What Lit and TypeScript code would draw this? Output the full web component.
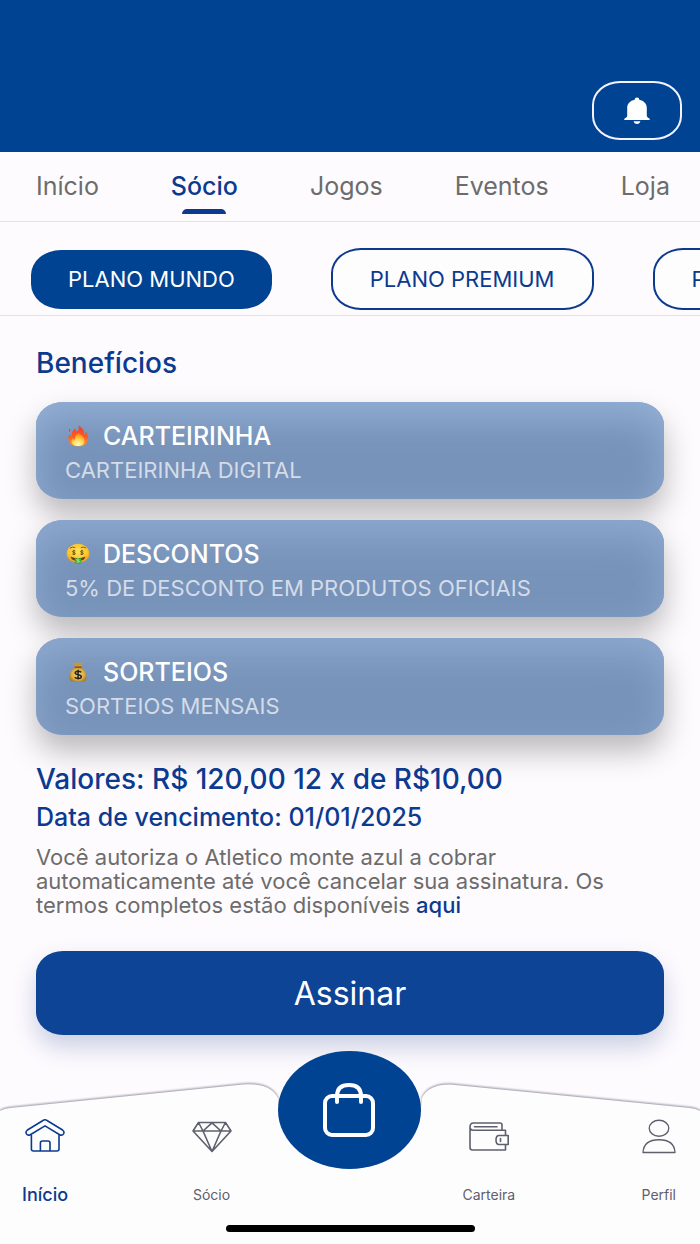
import { LitElement, html, css, svg } from "lit";
import { customElement, state } from "lit/decorators.js";

const bell = html`<svg width="28" height="28" viewBox="0 0 28 28" aria-hidden="true" fill="#fff">
  <path d="M14 0.6c1.3 0 2.2 .8 2.3 2.1c4.6 1 7.5 4 7.5 8.4v7.6c.3 1.500 1.200 2 2.900 3v1.300H1.300v-1.300c1.700-1 2.600-1.500 2.900-3v-7.600c0-4.400 2.900-7.400 7.500-8.400c.1-1.300 1-2.100 2.300-2.100z"/>
  <path d="M10.600 24.200h6.800c-.4 1.900-1.700 2.700-3.400 2.700s-3-.8-3.400-2.700z"/>
</svg>`;

const fire = html`<svg width="26" height="22" viewBox="0 0 26 22" aria-hidden="true">
  <defs>
    <linearGradient id="flame" x1="0" y1="0" x2="0" y2="1">
      <stop offset="0" stop-color="#f0402a"/><stop offset=".55" stop-color="#ff5b1f"/><stop offset="1" stop-color="#ffa12b"/>
    </linearGradient>
    <radialGradient id="core" cx=".5" cy=".85" r=".75">
      <stop offset="0" stop-color="#fffbd0"/><stop offset=".5" stop-color="#ffd84a"/><stop offset="1" stop-color="#ff8a22"/>
    </radialGradient>
  </defs>
  <path fill="url(#flame)" d="M13.300.5c4.300 2 6.200 5 5.900 9.200c1.200-.7 1.500-2 1.200-3.500c2.400 2.600 3.300 5.600 2.500 8.700c-1 4-4.900 6.400-9.700 6.400c-5.600 0-9.800-2.900-9.900-7.900c0-1.700.4-3.100 1.200-4.300c.3 1.400 1 2.300 2.200 2.700c-.6-4.200.8-7 4-8.300c-.3 1.400.1 2.400 1.200 3c1.800-1.400 2.400-3.400 1.400-6z"/>
  <path fill="#f0402a" d="M4.300 3.800c1.200.8 1.400 1.900.5 3.200c-1-.9-1.200-2-.5-3.200z"/>
  <path fill="url(#core)" d="M13.200 8.200c3.800 1.600 6.900 4.500 6.400 8.200c-.4 2.900-3 4.700-6.400 4.700s-6.700-1.700-6.800-4.700c-.1-1.500.4-2.600 1.300-3.500c.3 1.100 1 1.700 2.100 1.900c-.1-3 1-5.200 3.400-6.600z"/>
</svg>`;

const moneyFace = html`<svg width="26" height="22" viewBox="0 0 26 22" aria-hidden="true">
  <defs>
    <radialGradient id="face" cx=".5" cy=".4" r=".6">
      <stop offset="0" stop-color="#ffe55a"/><stop offset=".7" stop-color="#fcc52c"/><stop offset="1" stop-color="#e8921b"/>
    </radialGradient>
  </defs>
  <ellipse cx="13" cy="10.500" rx="11.400" ry="9.700" fill="url(#face)"/>
  <path d="M5 5.200q2.500-2 5.200-.6M15.800 4.600q2.700-1.400 5.200.6" fill="none" stroke="#8a5a12" stroke-width="1"/>
  <g fill="none" stroke="#6b4b12" stroke-width=".9">
    <path d="M10.400 8.200c-.6-.8-2.800-.8-2.900.4s3 .8 2.900 2s-2.400 1.200-3.100.3M8.900 6.800v5.200"/>
    <path d="M18.400 8.200c-.6-.8-2.800-.8-2.900.4s3 .8 2.900 2s-2.400 1.200-3.100.3M16.900 6.800v5.200"/>
  </g>
  <path d="M5.400 13.400q7.600 3.600 15.200 0q-1.500 4.600-7.600 4.600t-7.600-4.600z" fill="#6d3d10"/>
  <path d="M9.800 14.900q3.200.8 6.400 0v4.600q-.4 1.800-3.200 1.800t-3.200-1.800z" fill="#45ad3a"/>
  <path d="M14.300 16.500c-.6-.7-2.500-.6-2.500.3s2.600.7 2.500 1.700s-2 .9-2.600.2" fill="none" stroke="#d4f2c4" stroke-width=".8"/>
</svg>`;

const moneyBag = html`<svg width="26" height="22" viewBox="0 0 26 22" aria-hidden="true">
  <defs>
    <radialGradient id="bag" cx=".5" cy=".5" r=".6">
      <stop offset="0" stop-color="#f9d97a"/><stop offset=".6" stop-color="#dcae45"/><stop offset="1" stop-color="#9c6f20"/>
    </radialGradient>
  </defs>
  <path d="M8.200 1.500l2.400.6l2-.9l2.200.8l3-.8l-2.300 5h-5z" fill="#c9973a"/>
  <path d="M10.500 6h5.200c3.400 2.200 5.900 5.500 5.900 9.600c0 3.600-2 5.200-4.200 5.200H8.600c-2.300 0-4.200-1.600-4.200-5.200c0-4.100 2.600-7.400 6.100-9.600z" fill="url(#bag)"/>
  <path d="M9.800 6.200h6.600" stroke="#8b4a1c" stroke-width="1.400"/>
  <path d="M16.200 11.400c-1-1.700-6-1.600-6 .6s6.200 1.400 6.100 3.700s-5.400 2.300-6.400.3M13.100 8.800v9.800" fill="none" stroke="#22221e" stroke-width="1.500"/>
</svg>`;

const house = svg`<path d="M20 1.700Q21 1.700 22.400 2.700L37.600 12Q39.600 13.600 38.700 15.600Q37.300 18 34.700 16.800L20 7.900L5.300 16.800Q2.700 18 1.300 15.600Q.4 13.600 2.400 12L17.600 2.700Q19 1.700 20 1.700z"/>
  <path d="M6.400 17.400V31Q6.400 33 8.400 33H32Q34 33 34 31V17.400M15.400 33V25Q15.400 23 17.400 23H23Q25 23 25 25V33"/>`;
const diamond = svg`<path d="M6.500 4.500H33.500L39 13L20 33.500L1 13zM1 13H39M6.500 4.500L11 13L20 33.500L29 13L33.500 4.500M11 13L20 4.800L29 13"/>`;
const wallet = svg`<path d="M33 12.300V7Q33 5 31 5H4.500Q1 5 1 8.800V29.500Q1 32 3.500 32H36.500V26.500M36.500 17V12.300H4.500Q1 12.300 1 8.800M5.500 8.700H28M30 17.500H39.200V26.500H30Q27 26.500 27 22T30 17.500zM31.500 20.500V23.500"/>`;
const person = svg`<ellipse cx="20" cy="10.200" rx="11.500" ry="8"/><path d="M1.200 34.500Q2 21.800 20 21.800T38.800 34.500z"/>`;

const bagIcon = html`<svg width="54" height="56" viewBox="0 0 54 56" aria-hidden="true" fill="none" stroke="#fff" stroke-width="4" stroke-linecap="round">
  <rect x="3" y="14" width="48" height="39" rx="7"/>
  <path d="M15 20V14Q15 3 27 3T39 14V20"/>
</svg>`;

@customElement("app-root")
export class AppRoot extends LitElement {
  @state() private plan = 0;

  private tabs = ["Início", "Sócio", "Jogos", "Eventos", "Loja"];
  private plans = ["PLANO MUNDO", "PLANO PREMIUM", "PLANO"];
  private benefits = [
    { icon: fire, title: "CARTEIRINHA", text: "CARTEIRINHA DIGITAL" },
    { icon: moneyFace, title: "DESCONTOS", text: "5% DE DESCONTO EM PRODUTOS OFICIAIS" },
    { icon: moneyBag, title: "SORTEIOS", text: "SORTEIOS MENSAIS" },
  ];

  static styles = css`
    :host {
      display: flex;
      flex-direction: column;
      min-height: 100vh;
      overflow: hidden;
      background: #fefbff;
      color: #6c6c6c;
      font-family: Inter, "Liberation Sans", sans-serif;
      font-weight: 400;
    }
    * { box-sizing: border-box; }
    button { font: inherit; cursor: pointer; }
    a { text-decoration: none; color: inherit; }
    svg { display: block; }
    h1, h2, h3, p, ul { margin: 0; padding: 0; font-weight: 500; }

    .top {
      display: flex;
      justify-content: flex-end;
      align-items: flex-end;
      height: 152px;
      padding: 0 18px 12px;
      background: #004392;
    }
    .bell {
      display: grid;
      place-items: center;
      width: 90px;
      height: 59px;
      border: 2px solid #f4f2ff;
      border-radius: 28px / 24px;
      background: none;
    }

    .tabs {
      display: flex;
      justify-content: space-between;
      height: 70px;
      padding: 0 30px 0 36px;
      border-bottom: 1px solid #e4e0e8;
      font-size: 25px;
      line-height: 68px;
    }
    .tab { position: relative; }
    .tab.on { color: #0b3a8f; font-weight: 500; }
    .tab.on::after {
      content: "";
      position: absolute;
      left: calc(50% - 22px);
      bottom: 7px;
      width: 44px;
      height: 5px;
      border-radius: 5px 5px 0 0;
      background: #0b3a8f;
    }

    .plans {
      display: flex;
      align-items: center;
      gap: 59px;
      padding: 26px 0 5px 31px;
      border-bottom: 1px solid #e4e0e8;
      overflow: hidden;
    }
    .plan {
      flex: none;
      height: 62px;
      padding: 0 37px;
      border: 2px solid #0b3a8f;
      border-radius: 30px / 25px;
      background: #fdfdfd;
      color: #0b3a8f;
      font-size: 22px;
    }
    .plan.on {
      height: 59px;
      padding: 0 35px;
      border-color: #004392;
      background: #004392;
      color: #fff;
    }

    main { padding: 0 36px; flex: 1; }
    h2 {
      padding: 32px 0 24px;
      font-size: 28px;
      line-height: 30px;
      color: #0b3a8f;
    }
    .cards {
      display: grid;
      gap: 21px;
      list-style: none;
    }
    .card {
      height: 97px;
      padding: 20px 29px;
      border-radius: 27px / 23px;
      background: #7793b9;
      box-shadow: 0 16px 30px rgba(0, 0, 0, 0.27), inset 0 16px 36px #94afd6;
    }
    .card + .card { box-shadow: 0 16px 30px rgba(0, 0, 0, 0.27), inset 0 16px 36px #8ea9cf; }
    .card h3 {
      display: flex;
      align-items: center;
      gap: 12px;
      font-size: 25px;
      line-height: 28px;
      color: #fff;
    }
    .card p {
      padding-top: 8px;
      font-size: 22px;
      font-weight: 400;
      line-height: 24px;
      color: #d3dce8;
    }

    .price {
      padding-top: 28px;
      font-size: 28px;
      line-height: 32px;
      color: #0b3a8f;
    }
    .due {
      padding-top: 8px;
      font-size: 25px;
      line-height: 28px;
      color: #0b3a8f;
    }
    .terms {
      padding: 14px 0 34px;
      font-size: 22px;
      font-weight: 400;
      line-height: 24px;
    }
    .terms a {
      display: inline-block;
      color: #0b3a8f;
      font-weight: 500;
    }
    .subscribe {
      width: 100%;
      height: 84px;
      border: 0;
      border-radius: 27px / 23px;
      background: #0d4496;
      color: #fff;
      font-size: 32px;
      box-shadow: 0 12px 24px rgba(13, 50, 120, 0.22);
    }

    .nav {
      position: relative;
      display: grid;
      grid-template-columns: 1fr 143px 1fr;
      padding: 0 24px 0 22px;
      height: 194px;
    }
    .shape {
      position: absolute;
      inset: auto 0 0 0;
      width: 100%;
      height: 170px;
      filter: drop-shadow(0 -1px 1px rgba(60, 55, 75, 0.55));
    }
    .group {
      position: relative;
      display: flex;
      justify-content: space-between;
      padding-top: 68px;
    }
    .group.left { padding-right: 46px; }
    .group.right { padding-left: 42px; }
    .item {
      display: grid;
      justify-items: center;
      align-content: start;
      gap: 31px;
      font-size: 14px;
      line-height: 20px;
      color: #5f606e;
    }
    .item svg { fill: none; stroke: currentColor; stroke-width: 1.6; stroke-linejoin: round; stroke-linecap: round; }
    .item.on { color: #0b3a8f; font-size: 18px; font-weight: 500; }
    .shop {
      position: relative;
      display: grid;
      place-items: center;
      width: 143px;
      height: 118px;
      margin-top: 1px;
      padding: 0;
      border: 0;
      border-radius: 50%;
      background: #004392;
    }
    .home-bar {
      position: absolute;
      left: calc(50% - 124px);
      bottom: 12px;
      width: 249px;
      height: 7px;
      border-radius: 4px;
      background: #000;
    }
  `;

  private navItem(label: string, icon: unknown, on = false, width = 40) {
    return html`<a class="item ${on ? "on" : ""}" href="#">
      <svg width=${width} height="36" viewBox="0 0 40 36" preserveAspectRatio="none" aria-hidden="true">${icon}</svg>
      <span>${label}</span>
    </a>`;
  }

  render() {
    return html`
      <header class="top">
        <button class="bell" aria-label="Notificações">${bell}</button>
      </header>
      <nav class="tabs">
        ${this.tabs.map((t, i) => html`<a class="tab ${i === 1 ? "on" : ""}" href="#">${t}</a>`)}
      </nav>
      <div class="plans">
        ${this.plans.map(
          (p, i) => html`<button class="plan ${i === this.plan ? "on" : ""}" @click=${() => (this.plan = i)}>${p}</button>`
        )}
      </div>
      <main>
        <h2>Benefícios</h2>
        <ul class="cards">
          ${this.benefits.map((b) => html`<li class="card"><h3>${b.icon}${b.title}</h3><p>${b.text}</p></li>`)}
        </ul>
        <p class="price">Valores: R$ 120,00 12 x de R$10,00</p>
        <p class="due">Data de vencimento: 01/01/2025</p>
        <p class="terms">
          Você autoriza o Atletico monte azul a cobrar automaticamente até você cancelar sua assinatura. Os termos
          completos estão disponíveis <a href="#">aqui</a>
        </p>
        <button class="subscribe">Assinar</button>
      </main>
      <nav class="nav">
        <svg class="shape" viewBox="0 0 700 170" preserveAspectRatio="none" aria-hidden="true">
          <path fill="#fdfdfd" d="M0 37Q4 34.500 10 34L243 10.500Q270 8.500 278 24Q283 94 350 94T422 24Q428 10.500 450 10.500L690 34Q696 34.500 700 37V170H0z"/>
        </svg>
        <div class="group left">${this.navItem("Início", house, true)} ${this.navItem("Sócio", diamond)}</div>
        <button class="shop" aria-label="Loja">${bagIcon}</button>
        <div class="group right">${this.navItem("Carteira", wallet)} ${this.navItem("Perfil", person, false, 34)}</div>
        <div class="home-bar"></div>
      </nav>
    `;
  }
}
